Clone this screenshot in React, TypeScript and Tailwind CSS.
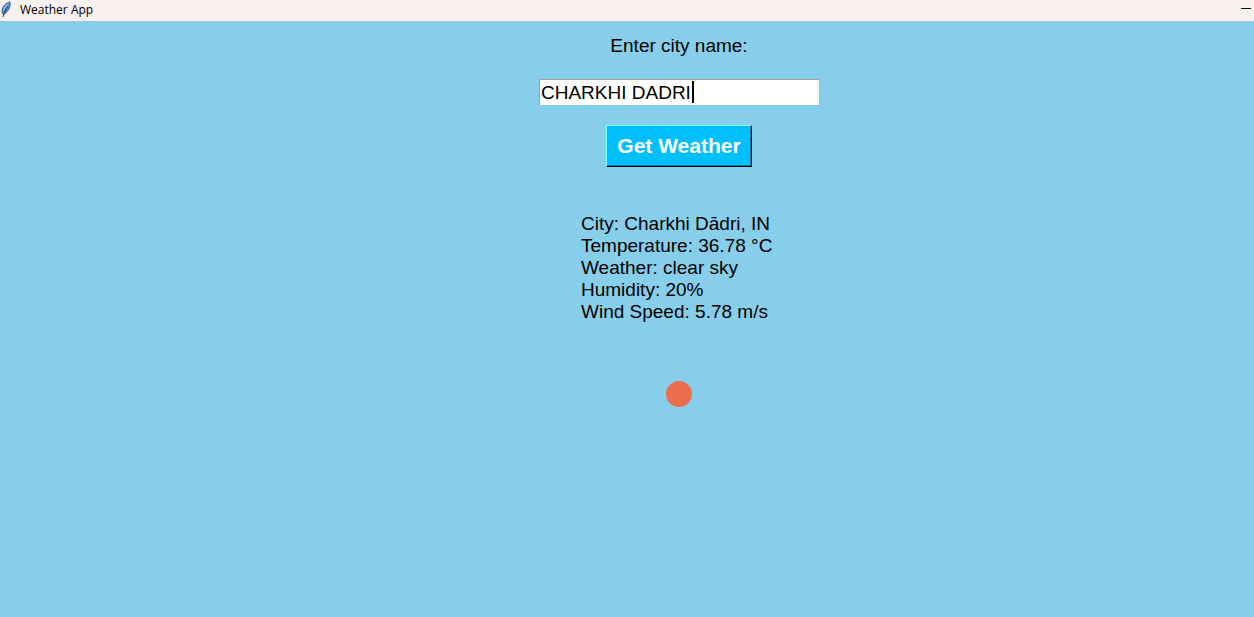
import { useState } from "react";

const report = [
  "City: Charkhi Dādri, IN",
  "Temperature: 36.78 °C",
  "Weather: clear sky",
  "Humidity: 20%",
  "Wind Speed: 5.78 m/s",
];

function FeatherIcon() {
  return (
    <svg width="12" height="18" viewBox="0 0 12 18" aria-hidden="true">
      <path d="M9.4 1C6.4 1.8 3 4.8 2 8.8L2.2 12.2L3.4 13.6C6.6 12 9.2 8.8 10 5L10.2 1.8Z" fill="#4a90e2" />
      <path d="M9 2C6.4 3 4 5.8 3.2 9.2L3.4 10.6C4.6 7.6 6.8 4.6 9 2Z" fill="#a9d2f8" />
      <path d="M9.4 1C6.4 1.8 3 4.8 2 8.8L2.2 12.2M9.4 1L10.3 1.8L10 5C9.2 8.8 6.6 12 3.6 13.6" fill="none" stroke="#26354f" strokeWidth="0.7" />
      <path d="M7.6 5.6C5.6 8.4 3.8 11.6 3 16.2" fill="none" stroke="#111a2c" strokeWidth="0.8" />
    </svg>
  );
}

function TitleBar() {
  return (
    <header className="flex h-[21px] items-start justify-between bg-[#f9f1f0] pr-[3px]">
      <div className="flex items-center gap-2">
        <FeatherIcon />
        <h1 className="pt-px font-['Open_Sans','Noto_Sans',sans-serif] text-[12px] leading-[18px] text-black">Weather App</h1>
      </div>
      <button type="button" aria-label="Minimize" className="flex h-[17px] w-[10px] items-center">
        <span className="h-px w-full bg-black" />
      </button>
    </header>
  );
}

export default function App() {
  const [city, setCity] = useState("CHARKHI DADRI");

  return (
    <div className="flex min-h-screen flex-col bg-[#87ceeb] font-['Liberation_Sans',Arial,sans-serif] text-[19px] leading-[22px] text-black">
      <TitleBar />
      <main className="flex flex-1 flex-col items-center pt-[14px] pl-[104px]">
        <label htmlFor="city">Enter city name:</label>
        <div className="relative mt-[22px]">
          <input
            id="city"
            type="text"
            value={city}
            onChange={(e) => setCity(e.target.value)}
            className="block h-[26px] w-[280px] border-t border-l border-[#a0a0a0] bg-white pl-px caret-transparent outline-none"
          />
          <span aria-hidden="true" className="absolute top-[2px] left-[153px] h-[22px] w-[2px] bg-black" />
        </div>
        <button
          type="button"
          className="mt-5 h-[42px] w-[146px] border border-t-[#7fffff] border-r-black border-b-black border-l-[#7fffff] bg-[#00bfff] text-[21px] font-bold text-white shadow-[inset_-1px_-1px_0_#0080aa]"
        >
          Get Weather
        </button>
        <ul className="mt-[46px] w-[196px]">
          {report.map((line) => (
            <li key={line} className="whitespace-nowrap">{line}</li>
          ))}
        </ul>
        <div className="mt-[58px] size-[26px] rounded-full bg-[#ec6e4c]" role="img" aria-label="Clear sky" />
      </main>
    </div>
  );
}
